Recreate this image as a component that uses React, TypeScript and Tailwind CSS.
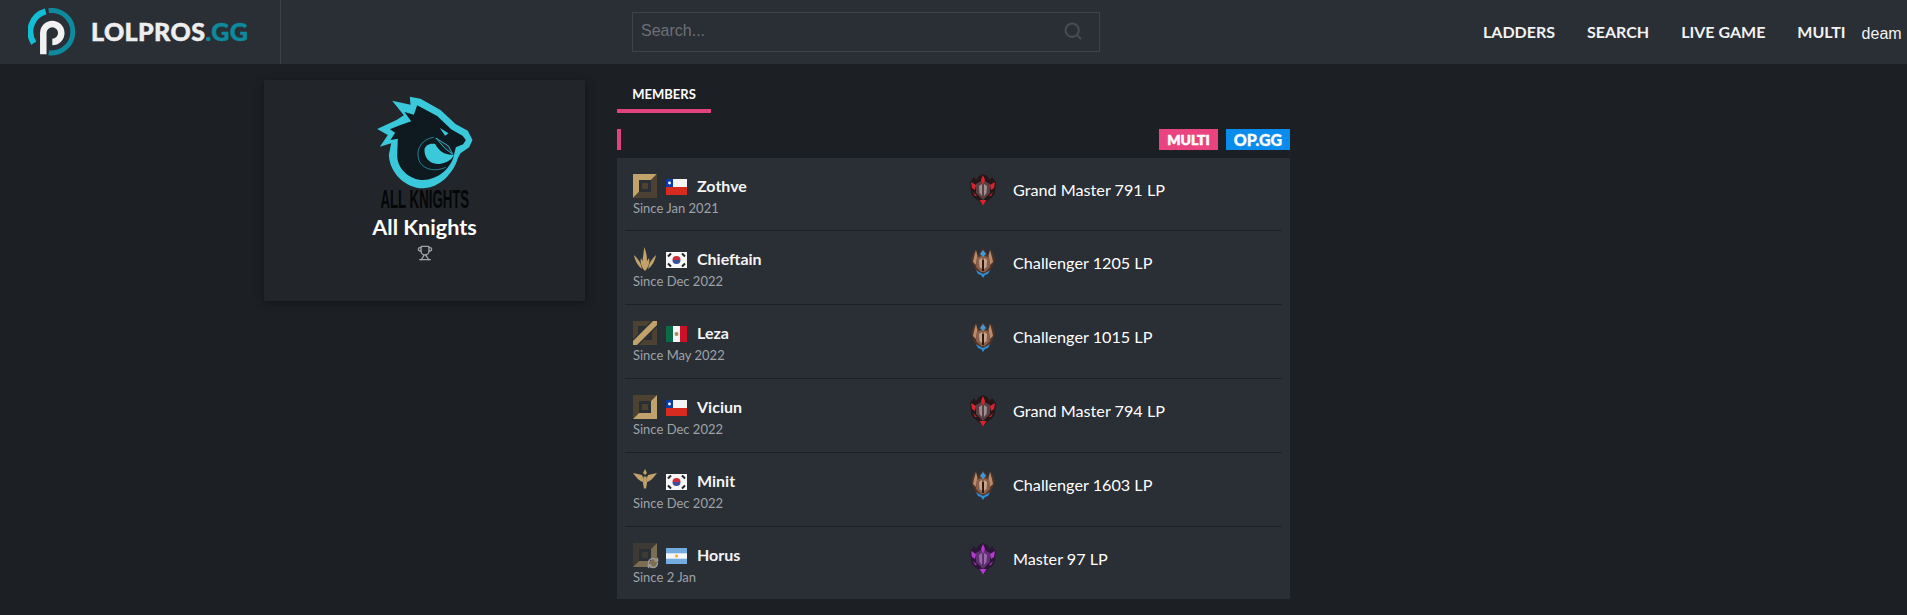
import { RefreshCw, Search, Trophy } from 'lucide-react';

type Role = 'top' | 'jungle' | 'mid' | 'adc' | 'support';
type Country = 'cl' | 'kr' | 'mx' | 'ar';
type Tier = 'grandmaster' | 'challenger' | 'master';

type Member = {
    name: string;
    role: Role;
    country: Country;
    since: string;
    tier: Tier;
    rank: string;
    sub?: boolean;
};

const members: Member[] = [
    { name: 'Zothve', role: 'top', country: 'cl', since: 'Since Jan 2021', tier: 'grandmaster', rank: 'Grand Master 791 LP' },
    { name: 'Chieftain', role: 'jungle', country: 'kr', since: 'Since Dec 2022', tier: 'challenger', rank: 'Challenger 1205 LP' },
    { name: 'Leza', role: 'mid', country: 'mx', since: 'Since May 2022', tier: 'challenger', rank: 'Challenger 1015 LP' },
    { name: 'Viciun', role: 'adc', country: 'cl', since: 'Since Dec 2022', tier: 'grandmaster', rank: 'Grand Master 794 LP' },
    { name: 'Minit', role: 'support', country: 'kr', since: 'Since Dec 2022', tier: 'challenger', rank: 'Challenger 1603 LP' },
    { name: 'Horus', role: 'adc', country: 'ar', since: 'Since 2 Jan', tier: 'master', rank: 'Master 97 LP', sub: true },
];

const GOLD = '#c0a26a';
const DIM = '#4d4232';

function Logo() {
    return (
        <svg width="48" height="48" viewBox="0 0 48 48" fill="none">
            <path d="M5.8 35.1 A21 21 0 0 1 17.6 3.4" stroke="#12bdd6" strokeWidth="6" />
            <path d="M20.7 2.7 A21.2 21.2 0 1 1 20.7 44.7" stroke="#0d8a9e" strokeWidth="5" />
            <path d="M15.3 46.3 V25 A9 9 0 1 1 24.3 34" stroke="#f1f1f1" strokeWidth="6.5" />
        </svg>
    );
}

function RoleIcon({ role, dim }: { role: Role; dim?: boolean }) {
    if (role === 'jungle') {
        return (
            <svg width="24" height="24" viewBox="0 0 24 24" fill={GOLD}>
                <path d="M12 24 C8 20 7 15 8 11 L9.5 14 C10 9 11 5 11 0 C13 4 14 8 14 14 L16 11 C17 15 16 20 12 24Z" />
                <path d="M9 22 C5 19 2 14 1 8 C4 11 7 14 8 18Z" />
                <path d="M15 22 C19 19 22 14 23 8 C20 11 17 14 16 18Z" />
            </svg>
        );
    }
    if (role === 'support') {
        return (
            <svg width="24" height="24" viewBox="0 0 24 24" fill={GOLD}>
                <path d="M0 4 L9 6 L10.5 10 L10 13 C6 12 3 8 0 4Z" />
                <path d="M24 4 L15 6 L13.5 10 L14 13 C18 12 21 8 24 4Z" />
                <path d="M12 0 L14 4 L12 6 L10 4Z" />
                <path d="M10.5 7.5 L13.5 7.5 L14 14 L13 20 L12 19 L11 20 L10 14Z" />
            </svg>
        );
    }
    if (role === 'mid') {
        return (
            <svg width="24" height="24" viewBox="0 0 24 24">
                <path d="M0 0 H18 L13 5 H5 V13 L0 18Z" fill={DIM} />
                <path d="M24 24 H6 L11 19 H19 V11 L24 6Z" fill={DIM} />
                <path d="M20 0 H24 V4 L4 24 H0 V20Z" fill={GOLD} />
            </svg>
        );
    }
    const topLeft = role === 'top' ? GOLD : DIM;
    const bottomRight = role === 'adc' ? GOLD : DIM;
    return (
        <svg width="24" height="24" viewBox="0 0 24 24" opacity={dim ? 0.55 : 1}>
            <path d="M0 0 H24 L18 6 H6 V18 L0 24Z" fill={topLeft} />
            <path d="M24 0 V24 H0 L6 18 H18 V6Z" fill={bottomRight} />
            <rect x="9" y="9" width="6" height="6" fill={DIM} />
        </svg>
    );
}

function Flag({ country }: { country: Country }) {
    if (country === 'cl') {
        return (
            <svg width="21" height="16" viewBox="0 0 21 16">
                <rect width="21" height="8" fill="#f4f4f4" />
                <rect y="8" width="21" height="8" fill="#d72b1f" />
                <rect width="7" height="8" fill="#0b3aa5" />
                <circle cx="3.5" cy="4" r="1.4" fill="#fff" />
            </svg>
        );
    }
    if (country === 'kr') {
        return (
            <svg width="21" height="16" viewBox="0 0 21 16">
                <rect width="21" height="16" fill="#f7f7f7" />
                <path d="M6.5 8 A4 4 0 0 1 14.5 8Z" fill="#cd2e3a" />
                <path d="M6.5 8 A4 4 0 0 0 14.5 8Z" fill="#3a4f9e" />
                <g stroke="#222" strokeWidth="2">
                    <path d="M2 4.5 L5 1.5" />
                    <path d="M16 1.5 L19 4.5" />
                    <path d="M2 11.5 L5 14.5" />
                    <path d="M16 14.5 L19 11.5" />
                </g>
            </svg>
        );
    }
    if (country === 'mx') {
        return (
            <svg width="21" height="16" viewBox="0 0 21 16">
                <rect width="7" height="16" fill="#0b6b47" />
                <rect x="7" width="7" height="16" fill="#f6f6f6" />
                <rect x="14" width="7" height="16" fill="#ce1126" />
                <circle cx="10.5" cy="8" r="2" fill="#a88a5c" />
            </svg>
        );
    }
    return (
        <svg width="21" height="16" viewBox="0 0 21 16">
            <rect width="21" height="16" fill="#74acdf" />
            <rect y="5.3" width="21" height="5.4" fill="#f6f6f6" />
            <circle cx="10.5" cy="8" r="1.5" fill="#f0a92b" />
        </svg>
    );
}

function RankIcon({ tier }: { tier: Tier }) {
    if (tier === 'challenger') {
        return (
            <svg width="26" height="32" viewBox="0 0 26 32">
                <path d="M3 18 L1 12 L3 6 L6 2 L7 8 L10 5 L13 1 L16 5 L19 8 L20 2 L23 6 L25 12 L23 18 L20 24 L13 28 L6 24Z" fill="#4e3426" />
                <path d="M4 10 L6 3 L7.5 9 L6 18 L3 15Z" fill="#b88c6c" />
                <path d="M22 10 L20 3 L18.5 9 L20 18 L23 15Z" fill="#b88c6c" />
                <path d="M6.5 12 C8 8 18 8 19.5 12 L20 20 L15 25 H11 L6 20Z" fill="#8a604a" />
                <path d="M9 13 L12 11 V22 L9.5 20Z" fill="#c8a48a" />
                <path d="M17 13 L14 11 V22 L16.5 20Z" fill="#c8a48a" />
                <path d="M12 13 H14 V24 H12Z" fill="#2a1a12" />
                <path d="M13 3 L16 7 L13 10 L10 7Z" fill="#3f9bd8" />
                <path d="M6 23 L9 25 L13 27 L17 25 L20 23 L18 27 L15 28 L13 31 L11 28 L8 27Z" fill="#2f8fd8" />
            </svg>
        );
    }
    const palette =
        tier === 'grandmaster'
            ? { dark: '#241619', mid: '#5a3e42', hi: '#d8242f', light: '#9c9092' }
            : { dark: '#2c1638', mid: '#5e3070', hi: '#b43ad0', light: '#9a68ac' };
    return (
        <svg width="26" height="32" viewBox="0 0 26 32">
            <path d="M0 8 L4 3 L6 6 L9 2 L13 0 L17 2 L20 6 L22 3 L26 8 L25 17 C25 22 20 25 17 27 L13 31 L9 27 C6 25 1 22 1 17Z" fill={palette.dark} />
            <path d="M6 10 L13 6 L20 10 L20 19 L13 26 L6 19Z" fill={palette.mid} />
            <path d="M9 12 L12 10 V22 L9.5 19Z" fill={palette.light} />
            <path d="M17 12 L14 10 V22 L16.5 19Z" fill={palette.light} />
            <path d="M13 1 L15 6 L13 11 L11 6Z" fill={palette.hi} />
            <path d="M1 8 L6 11 L5 16 L2 14Z" fill={palette.hi} />
            <path d="M25 8 L20 11 L21 16 L24 14Z" fill={palette.hi} />
            <path d="M3 18 L7 22 L5 22Z" fill={palette.hi} />
            <path d="M23 18 L19 22 L21 22Z" fill={palette.hi} />
            <path d="M9.5 26 H16.5 L13 31.5Z" fill={palette.hi} />
        </svg>
    );
}

// coordinates here are 3x page pixels, traced from the team badge
function TeamLogo() {
    return (
        <svg width="120" height="94" viewBox="13.5 12 360 282" className="overflow-visible">
            <path
                d="M95 32 L150 44 L148 20 L180 26 L240 60 L285 102 L322 122 L336 150 L326 172 L300 190 L292 205 C280 250 235 295 188 295 C135 295 88 250 85 195 L92 160 L58 170 L82 135 L50 117 L108 90 L130 76Z"
                fill="#3ac8db"
            />
            <path
                d="M132 66 L160 74 L170 46 L230 78 L272 118 L306 137 L316 150 L308 163 L286 172 L278 205 C266 238 230 270 188 270 C148 270 110 238 110 195 L112 146 L90 150 L104 128 L88 118 L122 104 L152 94Z"
                fill="#0e1a20"
            />
            <path d="M192 178 C190 206 214 232 252 218 C270 212 278 202 280 194 C254 196 236 184 224 162 C208 158 194 166 192 178Z" fill="#3ac8db" />
            <path d="M220 142 C186 146 166 176 174 206 C180 232 214 250 256 232" fill="none" stroke="#3ac8db" strokeWidth="1.8" />
            <path d="M238 114 L264 130 L254 137Z" fill="#3ac8db" />
            <path d="M226 144 L264 168 L276 192 L254 176Z" fill="#1a2a30" stroke="#3ac8db" strokeWidth="2.5" />
        </svg>
    );
}

export default function App() {
    return (
        <div className="min-h-screen bg-[#1c1f24] font-['Lato',sans-serif] text-white">
            {/* Top bar */}
            <header className="flex h-16 items-center bg-[#2a2e35]">
                <div className="flex h-full w-[281px] shrink-0 items-center border-r border-[#3c4047] pl-[28px]">
                    <Logo />
                    <span className="ml-[15px] text-[25px] font-black tracking-[0.4px] text-[#eeeeee] [-webkit-text-stroke:0.5px]">
                        LOLPROS<span className="text-[#0d8a9e]">.GG</span>
                    </span>
                </div>
                <div className="ml-[351px] flex h-10 w-[468px] items-center justify-between border border-[#3e424a] pb-[2px] pl-2 pr-[16px] font-['Liberation_Sans',sans-serif] text-[16px] text-[#6c7076]">
                    <span>Search...</span>
                    <Search className="h-5 w-5 text-[#484c53]" strokeWidth={2.5} />
                </div>
                <nav className="ml-[383px] flex items-center gap-8 text-[16px] font-bold text-[#f2f2f2]">
                    <span>LADDERS</span>
                    <span>SEARCH</span>
                    <span>LIVE GAME</span>
                    <span>MULTI</span>
                </nav>
                <span className="ml-4 mt-[3px] font-['Liberation_Sans',sans-serif] text-[16px] text-[#f2f2f2]">deam</span>
            </header>

            <main className="flex items-start gap-8 pl-[264px] pb-4">
                {/* Team card */}
                <div className="mt-4 flex h-[221px] w-[321px] flex-col items-center bg-[#22252a] pt-[14px] shadow-[0_2px_8px_rgba(0,0,0,0.35)]">
                    <TeamLogo />
                    <span className="mt-[1px] scale-x-[0.53] whitespace-nowrap font-['Liberation_Sans',sans-serif] text-[25px] font-bold leading-[20px] text-[#050607]">
                        ALL KNIGHTS
                    </span>
                    <h1 className="mt-[5px] text-[21.6px] font-bold leading-[26px]">All Knights</h1>
                    <Trophy className="mt-[5px] h-4 w-4 text-[#a2a4a6]" />
                </div>

                {/* Members */}
                <div className="w-[673px]">
                    <div className="h-[49px] pt-[5px]">
                        <div className="flex h-[44px] w-[94px] items-center justify-center border-b-4 border-[#e2437f] pt-[15px] text-[13px] font-bold">
                            <span className="-mt-[3px]">MEMBERS</span>
                        </div>
                    </div>
                    <div className="mt-4 flex h-[21px] items-stretch justify-between">
                        <div className="w-1 bg-[#e2437f]" />
                        <div className="flex gap-2 font-black leading-[21px]">
                            <span className="w-[59px] bg-[#e9447f] text-center text-[14px] [-webkit-text-stroke:0.6px]">MULTI</span>
                            <span className="w-[64px] bg-[#0a8ced] text-center text-[16px] [-webkit-text-stroke:0.3px]">OP.GG</span>
                        </div>
                    </div>
                    <div className="mt-2 bg-[#2a2e35] px-2">
                        {members.map((member) => (
                            <div
                                key={member.name}
                                className="flex h-[74px] items-start border-b border-[#1d2025] pl-2 pt-4 first:h-[73px] last:h-[72px] last:border-b-0"
                            >
                                <div className="w-[337px]">
                                    <div className="flex h-6 items-center">
                                        <div className="relative h-6 w-6">
                                            <RoleIcon role={member.role} dim={member.sub} />
                                            {member.sub && (
                                                <RefreshCw className="absolute left-[14px] top-[14px] h-3 w-3 text-[#9a9a9a]" strokeWidth={3} />
                                            )}
                                        </div>
                                        <div className="ml-[9px] mt-[1px] flex">
                                            <Flag country={member.country} />
                                        </div>
                                        <span className="ml-[10px] text-[16px] font-bold text-[#f4f4f4]">{member.name}</span>
                                    </div>
                                    <p className="text-[13px] leading-[20px] text-[#9ea3a8]">{member.since}</p>
                                </div>
                                <div className="flex h-[32px] items-center">
                                    <RankIcon tier={member.tier} />
                                    <span className="ml-[17px] text-[16.2px] text-white">{member.rank}</span>
                                </div>
                            </div>
                        ))}
                    </div>
                </div>
            </main>
        </div>
    );
}
